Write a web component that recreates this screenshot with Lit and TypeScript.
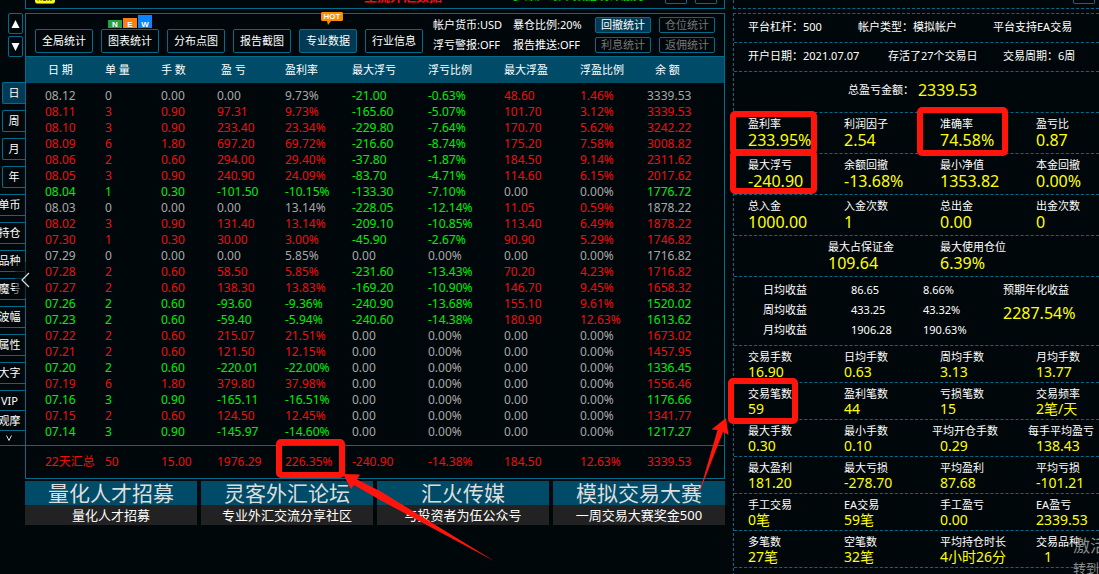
import { LitElement, html, css, svg } from "lit";
import { customElement } from "lit/decorators.js";
import { classMap } from "lit/directives/class-map.js";

const DAYS = `08.12 0 0.00 0.00 9.73% -21.00 -0.63% 48.60 1.46% 3339.53
08.11 3 0.90 97.31 9.73% -165.60 -5.07% 101.70 3.12% 3339.53
08.10 3 0.90 233.40 23.34% -229.80 -7.64% 170.70 5.62% 3242.22
08.09 6 1.80 697.20 69.72% -216.60 -8.74% 175.20 7.58% 3008.82
08.06 2 0.60 294.00 29.40% -37.80 -1.87% 184.50 9.14% 2311.62
08.05 3 0.90 240.90 24.09% -83.70 -4.71% 114.60 6.15% 2017.62
08.04 1 0.30 -101.50 -10.15% -133.30 -7.10% 0.00 0.00% 1776.72
08.03 0 0.00 0.00 13.14% -228.05 -12.14% 11.05 0.59% 1878.22
08.02 3 0.90 131.40 13.14% -209.10 -10.85% 113.40 6.49% 1878.22
07.30 1 0.30 30.00 3.00% -45.90 -2.67% 90.90 5.29% 1746.82
07.29 0 0.00 0.00 5.85% 0.00 0.00% 0.00 0.00% 1716.82
07.28 2 0.60 58.50 5.85% -231.60 -13.43% 70.20 4.23% 1716.82
07.27 2 0.60 138.30 13.83% -169.20 -10.90% 146.70 9.45% 1658.32
07.26 2 0.60 -93.60 -9.36% -240.90 -13.68% 155.10 9.61% 1520.02
07.23 2 0.60 -59.40 -5.94% -240.60 -14.38% 180.90 12.63% 1613.62
07.22 2 0.60 215.07 21.51% 0.00 0.00% 0.00 0.00% 1673.02
07.21 2 0.60 121.50 12.15% 0.00 0.00% 0.00 0.00% 1457.95
07.20 2 0.60 -220.01 -22.00% 0.00 0.00% 0.00 0.00% 1336.45
07.19 6 1.80 379.80 37.98% 0.00 0.00% 0.00 0.00% 1556.46
07.16 3 0.90 -165.11 -16.51% 0.00 0.00% 0.00 0.00% 1176.66
07.15 2 0.60 124.50 12.45% 0.00 0.00% 0.00 0.00% 1341.77
07.14 3 0.90 -145.97 -14.60% 0.00 0.00% 0.00 0.00% 1217.27`
  .split("\n")
  .map((line) => line.split(" "));

const TOTAL = ["22天汇总", "50", "15.00", "1976.29", "226.35%", "-240.90", "-14.38%", "184.50", "12.63%", "3339.53"];

const HEADS = ["日 期", "单 量", "手 数", "盈 亏", "盈利率", "最大浮亏", "浮亏比例", "最大浮盈", "浮盈比例", "余 额"];

const tone = (value: string) => {
  const n = parseFloat(value);
  return n > 0 ? "up" : n < 0 ? "down" : "flat";
};

/* Floating loss and gain columns follow their own sign, the others the day's result. */
const cellTone = (row: string[], i: number) => (i >= 5 && i <= 8 ? tone(row[i]) : tone(row[3]));

@customElement("side-nav")
export class SideNav extends LitElement {
  static styles = css`
    :host { display: flex; flex-direction: column; align-items: flex-end; overflow: hidden; padding-top: 13px; box-sizing: border-box; position: relative; }
    button { font: inherit; color: #fff; background: #00070a; border: 1px solid #006b8a; padding: 0; line-height: 20px; height: 22px; box-sizing: border-box; white-space: nowrap; }
    .step { width: 15px; height: 21px; margin: 0 2px 2px 0; border-radius: 2px; display: grid; place-items: center; }
    .tabs { display: flex; flex-direction: column; align-items: flex-end; gap: 6px; margin-top: 23px; }
    .short { width: 23px; border-right-width: 0; border-radius: 2px 0 0 2px; }
    .long { width: 32px; border-right-width: 0; }
    .on { background: #003a55; }
    .tail { display: flex; flex-direction: column; align-items: flex-end; margin-top: 6px; }
    .tail .long { height: 20px; line-height: 18px; border-bottom-width: 0; }
    .more { width: 32px; height: 16px; border-width: 1px 0; line-height: 12px; }
    svg { display: block; fill: #fff; }
    .chev { fill: none; stroke: #ddd; margin: 0 auto; }
  `;
  render() {
    const short = ["日", "周", "月", "年"];
    const long = ["单币", "持仓", "品种", "魔号", "波幅", "属性", "大字"];
    return html`
      <button class="step" aria-label="上移"><svg width="9" height="8"><path d="M4.500 0L8.500 8H.5z" /></svg></button>
      <button class="step" aria-label="下移"><svg width="9" height="8"><path d="M4.500 8L8.500 0H.5z" /></svg></button>
      <nav class="tabs">
        ${short.map((t, i) => html`<button class=${classMap({ short: true, on: i === 0 })}>${t}</button>`)}
        ${long.map((t) => html`<button class="long">${t}</button>`)}
      </nav>
      <div class="tail">
        <button class="long">VIP</button>
        <button class="long">观摩</button>
        <button class="more" aria-label="更多"><svg class="chev" width="6" height="6"><path d="M.5 .5L3 5.5L5.5 .5" /></svg></button>
      </div>`;
  }
}

@customElement("day-table")
export class DayTable extends LitElement {
  static styles = css`
    :host { display: block; }
    table { width: 100%; table-layout: fixed; border-collapse: separate; border-spacing: 0; font-size: 12px; line-height: 16px; }
    th, td { padding: 0; text-align: left; font-weight: 400; white-space: nowrap; }
    th:first-child, td:first-child { padding-left: 19px; }
    th { background: #004c68; border-top: 1px solid #006b8a; color: #fff; font-size: 11px; height: 26px; }
    th.in { padding-left: 4px; }
    th.in:first-child { padding-left: 22px; }
    th.in:last-child { padding-left: 8px; }
    .gap td { height: 5px; line-height: 0; }
    tfoot td { height: 32px; border-top: 1px solid #006b8a; }
    .up { color: #f00e0e; }
    .down { color: #00f000; }
    .flat { color: #a8a8a8; }
    .c0 { width: 79px; } .c1, .c2 { width: 56px; } .c3 { width: 68px; } .c4, .c8 { width: 67px; }
    .c5, .c6, .c7 { width: 76px; } .c9 { width: 77px; }
  `;
  render() {
    return html`<table>
      <colgroup>${HEADS.map((_, i) => html`<col class="c${i}" />`)}</colgroup>
      <thead><tr>${HEADS.map((h, i) => html`<th scope="col" class=${classMap({ in: i === 0 || i === 3 || i === 9 })}>${h}</th>`)}</tr></thead>
      <tbody>
        <tr class="gap"><td colspan="10"></td></tr>
        ${DAYS.map((r) => html`<tr>${r.map((v, i) => html`<td class=${cellTone(r, i)}>${v}</td>`)}</tr>`)}
        <tr class="gap"><td colspan="10"></td></tr>
      </tbody>
      <tfoot><tr>${TOTAL.map((v) => html`<td class="up">${v}</td>`)}</tr></tfoot>
    </table>`;
  }
}

@customElement("report-panel")
export class ReportPanel extends LitElement {
  static styles = css`
    :host { display: block; }
    .top { height: 8px; border: 1px solid #006b8a; border-top: 0; display: flex; align-items: flex-end; justify-content: flex-end; gap: 8px; padding-right: 7px; overflow: hidden; position: relative; }
    .stub { width: 22px; height: 4px; margin-bottom: 4px; box-sizing: border-box; border: 1px solid #006b8a; border-top: 0; border-radius: 0 0 2px 2px; }
    .cut { position: absolute; bottom: 4px; line-height: 16px; font-size: 12px; white-space: nowrap; }
    .tag { left: 9px; color: #111; background: #ff0; border-bottom: 1px solid #29f; border-radius: 3px; font-size: 8px; line-height: 10px; bottom: 4px; padding: 0 2px; }
    .red { left: 338px; color: #f00e0e; font-weight: 700; font-size: 13px; }
    .green { left: 487px; color: #00f000; }
    .panel { margin-top: 4px; border: 1px solid #006b8a; }
    .bar { display: flex; align-items: flex-end; padding: 3px 9px 3px 9px; gap: 10px; }
    .group { display: flex; gap: 8px; }
    button { font: inherit; color: #fff; background: #00070a; border: 1px solid #006b8a; border-radius: 2px; padding: 0; position: relative; box-sizing: border-box; white-space: nowrap; }
    .tab { width: 58px; height: 24px; line-height: 22px; }
    .on { background: #003a55; }
    .info { display: grid; grid-template-columns: 80px auto; row-gap: 4px; line-height: 16px; white-space: nowrap; flex: 1; justify-content: start; }
    .minis { display: grid; grid-template-columns: 56px 56px; gap: 4px 8px; }
    .mini { height: 16px; line-height: 14px; color: #777; }
    .mini.on { color: #fff; }
    .new { position: absolute; left: 6px; bottom: 24px; display: flex; align-items: flex-end; gap: 1px; }
    .new svg, .hot { display: block; }
    .hot { position: absolute; left: 21px; top: -18px; }
    .badge { font: 700 8px/8px "Liberation Sans", sans-serif; fill: #fff; text-anchor: middle; }
    .ads { display: grid; grid-template-columns: repeat(4, 1fr); gap: 4px; margin-top: 2px; }
    .ad { display: block; text-align: center; text-decoration: none; white-space: nowrap; }
    .name { display: block; font-size: 21px; line-height: 24px; background: #004c68; color: #ddd; }
    .desc { display: block; font-size: 13px; line-height: 20px; background: #222; color: #fff; }
  `;
  render() {
    const tabs = ["全局统计", "图表统计", "分布点图", "报告截图", "专业数据", "行业信息"];
    const ads = [
      ["量化人才招募", "量化人才招募"],
      ["灵客外汇论坛", "专业外汇交流分享社区"],
      ["汇火传媒", "与投资者为伍公众号"],
      ["模拟交易大赛", "一周交易大赛奖金500"],
    ];
    const box = (l: string, h: number, c: string) => html`
      <svg width="14" height=${h}><rect width="14" height=${h} fill=${c} /><text class="badge" x="7" y=${h - 1}>${l}</text></svg>`;
    const extra = (i: number) =>
      i === 1
        ? html`<span class="new">${box("N", 8, "#27a243")}${box("E", 10, "#ff7f0e")}${box("W", 13, "#0a84ff")}</span>`
        : i === 4
          ? html`<svg class="hot" width="22" height="13"><path d="M1 0H21L22 1V8L21 9H10L7 13L6 9H1L0 8V1z" fill="#ff8c00" /><text class="badge" x="11" y="7">HOT</text></svg>`
          : "";
    return html`
      <div class="top">
        <span class="cut tag">new</span>
        <span class="cut red">主流外汇数据</span>
        <span class="cut green">多账户跟单数据统计服务</span>
        <span class="stub"></span><span class="stub"></span>
      </div>
      <section class="panel">
        <div class="bar">
          <div class="group">${tabs.map((t, i) => html`<button class=${classMap({ tab: true, on: i === 4 })}>${t}${extra(i)}</button>`)}</div>
          <div class="info"><span>帐户货币:USD</span><span>暴仓比例:20%</span><span>浮亏警报:OFF</span><span>报告推送:OFF</span></div>
          <div class="minis">
            <button class="mini on">回撤统计</button><button class="mini">仓位统计</button>
            <button class="mini">利息统计</button><button class="mini">返佣统计</button>
          </div>
        </div>
        <day-table></day-table>
      </section>
      <div class="ads">${ads.map(([n, d]) => html`<a class="ad" href="#"><span class="name">${n}</span><span class="desc">${d}</span></a>`)}</div>`;
  }
}

type Stat = [label: string, value: string, mode?: string];

@customElement("stats-panel")
export class StatsPanel extends LitElement {
  static styles = css`
    :host { display: block; white-space: nowrap; color: #fff; overflow: hidden; }
    .top { height: 8px; border: dashed #006b8a; border-width: 0 0 1px 1px; display: flex; justify-content: flex-end; }
    .stub { width: 22px; height: 4px; margin-right: 4px; box-sizing: border-box; border: 1px solid #006b8a; border-top: 0; border-radius: 0 0 2px 2px; }
    .box { margin-top: 4px; border: dashed #006b8a; border-width: 1px 0 0 1px; }
    .row { display: grid; grid-template-columns: repeat(3, 96px) 1fr; padding-left: 14px; border-bottom: 1px dashed #006b8a; box-sizing: border-box; height: 41px; }
    .first, .second { height: 29px; line-height: 26px; }
    .first { grid-template-columns: 110px 135px 1fr; }
    .second { grid-template-columns: 140px 115px 1fr; }
    .sum { display: flex; justify-content: center; align-items: center; gap: 4px; padding: 0 8px 4px 0; }
    .two { grid-template-columns: 112px 1fr; padding-left: 94px; }
    .low { height: 37px; }
    .label { display: block; line-height: 16px; padding-top: 3px; }
    .value { display: block; line-height: 16px; font-size: 16px; color: #ff0; }
    .low .value { font-size: 14px; line-height: 14px; }
    .wide .label { margin-left: -8px; }
    .indent .value { padding-left: 8px; }
    .avg { height: 69px; grid-template-columns: 1fr 96px; align-items: start; padding: 3px 0 0 29px; }
    .lines { border-collapse: collapse; table-layout: fixed; width: 200px; line-height: 20px; }
    .lines th, .lines td { padding: 0; text-align: left; font-weight: 400; }
    .n { width: 88px; } .m { width: 72px; } .k { width: 40px; }
    .year { display: block; line-height: 20px; }
    .year + .value { line-height: 26px; }
    .rest { height: 8px; }
  `;
  stats(list: Stat[], cls = "") {
    return html`<div class="row ${cls}">${list.map(
      ([l, v, mode = ""]) => html`<div class=${mode}><span class="label">${l}</span><span class="value">${v}</span></div>`,
    )}</div>`;
  }
  render() {
    const avg = [["日均收益", "86.65", "8.66%"], ["周均收益", "433.25", "43.32%"], ["月均收益", "1906.28", "190.63%"]];
    return html`
      <div class="top"><span class="stub"></span></div>
      <div class="box">
        <div class="row first"><span>平台杠杆：500</span><span>帐户类型：模拟帐户</span><span>平台支持EA交易</span></div>
        <div class="row second"><span>开户日期：2021.07.07</span><span>存活了27个交易日</span><span>交易周期：6周</span></div>
        <div class="row sum"><span>总盈亏金额：</span><span class="value">2339.53</span></div>
        ${this.stats([["盈利率", "233.95%"], ["利润因子", "2.54"], ["准确率", "74.58%"], ["盈亏比", "0.87"]])}
        ${this.stats([["最大浮亏", "-240.90"], ["余额回撤", "-13.68%"], ["最小净值", "1353.82"], ["本金回撤", "0.00%"]])}
        ${this.stats([["总入金", "1000.00"], ["入金次数", "1"], ["总出金", "0.00"], ["出金次数", "0"]])}
        ${this.stats([["最大占保证金", "109.64"], ["最大使用仓位", "6.39%"]], "two")}
        <div class="row avg">
          <table class="lines">
            <colgroup><col class="n" /><col class="m" /><col class="k" /></colgroup>
            <tbody>${avg.map(([a, b, c]) => html`<tr><th scope="row">${a}</th><td>${b}</td><td>${c}</td></tr>`)}</tbody>
          </table>
          <div><span class="year">预期年化收益</span><span class="value">2287.54%</span></div>
        </div>
        ${this.stats([["交易手数", "16.90"], ["日均手数", "0.63"], ["周均手数", "3.13"], ["月均手数", "13.77"]], "low")}
        ${this.stats([["交易笔数", "59"], ["盈利笔数", "44"], ["亏损笔数", "15"], ["交易频率", "2笔/天"]], "low")}
        ${this.stats([["最大手数", "0.30"], ["最小手数", "0.10"], ["平均开仓手数", "0.29", "wide"], ["每手平均盈亏", "138.43", "wide"]], "low")}
        ${this.stats([["最大盈利", "181.20"], ["最大亏损", "-278.70"], ["平均盈利", "87.68"], ["平均亏损", "-101.21"]], "low")}
        ${this.stats([["手工交易", "0笔"], ["EA交易", "59笔"], ["手工盈亏", "0.00"], ["EA盈亏", "2339.53"]], "low")}
        ${this.stats([["多笔数", "27笔"], ["空笔数", "32笔"], ["平均持仓时长", "4小时26分"], ["交易品种", "1", "indent"]], "low")}
        <div class="rest"></div>
      </div>`;
  }
}

@customElement("app-root")
export class AppRoot extends LitElement {
  static styles = css`
    :host { display: grid; grid-template-columns: 25px minmax(0, 1fr) 366px; height: 100vh; background: #00070a; color: #fff; font: 11px/16px "Noto Sans", "Noto Sans CJK SC", sans-serif; position: relative; overflow: hidden; }
    report-panel { margin-right: 8px; }
    .fold { position: absolute; left: 15px; top: 262px; width: 20px; height: 36px; padding: 0; border: 0; background: rgba(0, 7, 10, 0.5); display: grid; place-items: center; }
    .marks { position: absolute; left: 0; top: 0; pointer-events: none; }
    .frame { fill: none; stroke: #ff150c; stroke-width: 6; }
    .arrow { fill: #ff150c; }
    .os { position: absolute; left: 1073px; top: 534px; color: #8a8d8e; white-space: nowrap; }
    .big { font-size: 17px; line-height: 24px; }
    .small { font-size: 13px; line-height: 20px; }
  `;
  render() {
    const frames = [[733, 114, 81, 38], [733, 153, 81, 38], [920, 110, 85, 43], [731, 381, 64, 40], [279, 442, 63, 33]];
    return html`
      <side-nav></side-nav>
      <report-panel></report-panel>
      <stats-panel></stats-panel>
      <button class="fold" aria-label="收起"><svg width="10" height="16"><path d="M9 1L2 8L9 15" fill="none" stroke="#ddd" stroke-width="1.2" /></svg></button>
      <div class="os"><div class="big">激活 Windows</div><div class="small">转到“设置”以激活 Windows。</div></div>
      <svg class="marks" width="1099" height="574">
        ${frames.map(([x, y, w, h]) => svg`<rect class="frame" x=${x} y=${y} width=${w} height=${h} rx="2" />`)}
        <path class="arrow" d="M343 474L360 474.500L357 479.500L380 491L495 561.500L380 500L354 485L351 489z" />
        <path class="arrow" d="M726 418L728.500 435L723 432L699 493.500L717.500 430L711.500 429.500z" />
      </svg>`;
  }
}
